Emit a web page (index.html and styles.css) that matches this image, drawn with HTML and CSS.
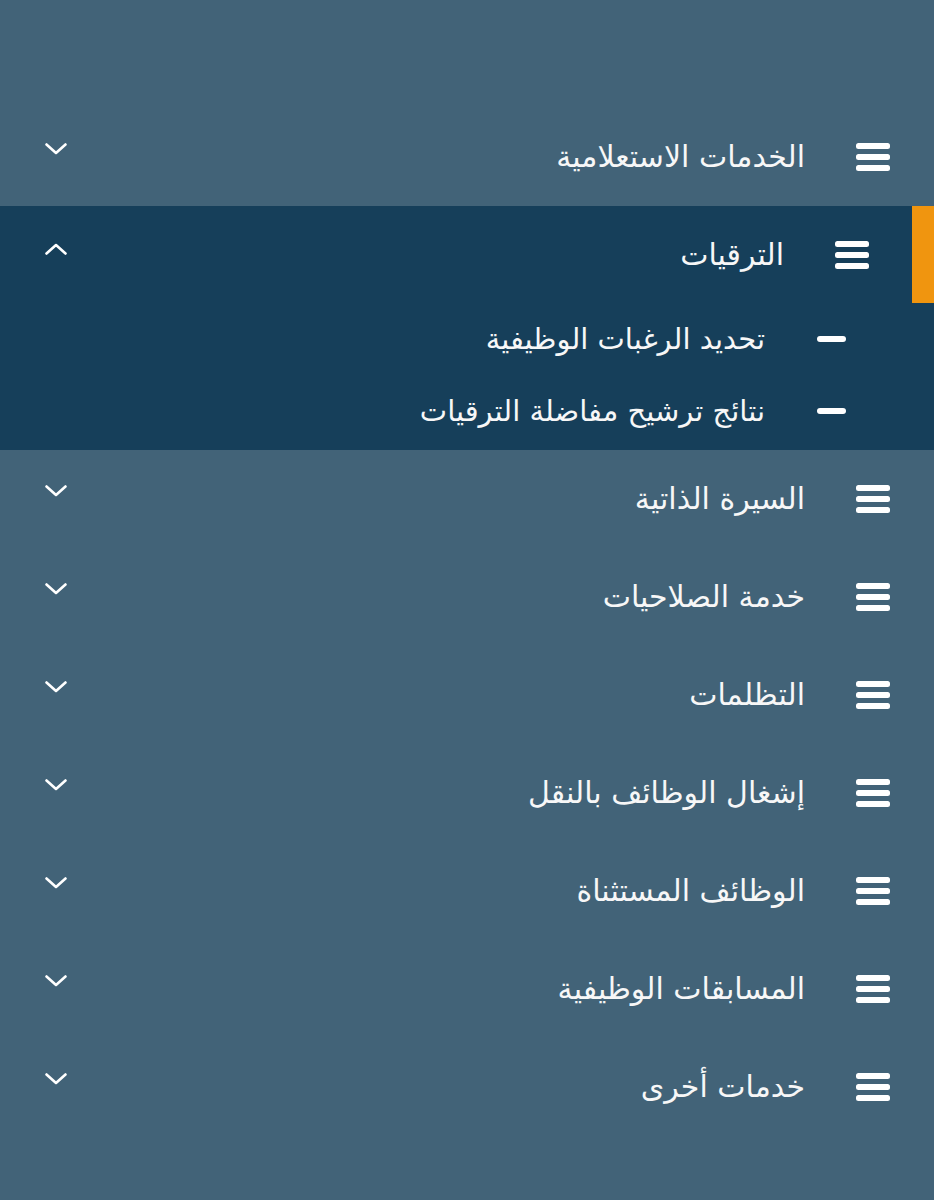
FILE: index.html
```html
<!DOCTYPE html>
<html lang="ar" dir="rtl">
<head>
<meta charset="utf-8">
<link rel="stylesheet" href="styles.css">
</head>
<body>
<nav class="menu">
  <div class="item">
    <div class="row">
      <svg class="burger" viewBox="0 0 34 28"><rect x="0" y="0" width="34" height="6" rx="2.5"/><rect x="0" y="11" width="34" height="6" rx="2.5"/><rect x="0" y="22" width="34" height="6" rx="2.5"/></svg>
      <span class="label">الخدمات الاستعلامية</span>
      <svg class="chev" viewBox="0 0 22 12"><path d="M1.5 1.5 L11 10 L20.5 1.5"/></svg>
    </div>
  </div>
  <div class="item open">
    <div class="row">
      <svg class="burger" viewBox="0 0 34 28"><rect x="0" y="0" width="34" height="6" rx="2.5"/><rect x="0" y="11" width="34" height="6" rx="2.5"/><rect x="0" y="22" width="34" height="6" rx="2.5"/></svg>
      <span class="label">الترقيات</span>
      <svg class="chev" viewBox="0 0 22 12"><path d="M1.5 10.5 L11 2 L20.5 10.5"/></svg>
    </div>
    <ul class="sub">
      <li><span class="dash"></span><span class="sublabel">تحديد الرغبات الوظيفية</span></li>
      <li><span class="dash"></span><span class="sublabel">نتائج ترشيح مفاضلة الترقيات</span></li>
    </ul>
  </div>
  <div class="item">
    <div class="row">
      <svg class="burger" viewBox="0 0 34 28"><rect x="0" y="0" width="34" height="6" rx="2.5"/><rect x="0" y="11" width="34" height="6" rx="2.5"/><rect x="0" y="22" width="34" height="6" rx="2.5"/></svg>
      <span class="label">السيرة الذاتية</span>
      <svg class="chev" viewBox="0 0 22 12"><path d="M1.5 1.5 L11 10 L20.5 1.5"/></svg>
    </div>
  </div>
  <div class="item">
    <div class="row">
      <svg class="burger" viewBox="0 0 34 28"><rect x="0" y="0" width="34" height="6" rx="2.5"/><rect x="0" y="11" width="34" height="6" rx="2.5"/><rect x="0" y="22" width="34" height="6" rx="2.5"/></svg>
      <span class="label">خدمة الصلاحيات</span>
      <svg class="chev" viewBox="0 0 22 12"><path d="M1.5 1.5 L11 10 L20.5 1.5"/></svg>
    </div>
  </div>
  <div class="item">
    <div class="row">
      <svg class="burger" viewBox="0 0 34 28"><rect x="0" y="0" width="34" height="6" rx="2.5"/><rect x="0" y="11" width="34" height="6" rx="2.5"/><rect x="0" y="22" width="34" height="6" rx="2.5"/></svg>
      <span class="label">التظلمات</span>
      <svg class="chev" viewBox="0 0 22 12"><path d="M1.5 1.5 L11 10 L20.5 1.5"/></svg>
    </div>
  </div>
  <div class="item">
    <div class="row">
      <svg class="burger" viewBox="0 0 34 28"><rect x="0" y="0" width="34" height="6" rx="2.5"/><rect x="0" y="11" width="34" height="6" rx="2.5"/><rect x="0" y="22" width="34" height="6" rx="2.5"/></svg>
      <span class="label">إشغال الوظائف بالنقل</span>
      <svg class="chev" viewBox="0 0 22 12"><path d="M1.5 1.5 L11 10 L20.5 1.5"/></svg>
    </div>
  </div>
  <div class="item">
    <div class="row">
      <svg class="burger" viewBox="0 0 34 28"><rect x="0" y="0" width="34" height="6" rx="2.5"/><rect x="0" y="11" width="34" height="6" rx="2.5"/><rect x="0" y="22" width="34" height="6" rx="2.5"/></svg>
      <span class="label">الوظائف المستثناة</span>
      <svg class="chev" viewBox="0 0 22 12"><path d="M1.5 1.5 L11 10 L20.5 1.5"/></svg>
    </div>
  </div>
  <div class="item">
    <div class="row">
      <svg class="burger" viewBox="0 0 34 28"><rect x="0" y="0" width="34" height="6" rx="2.5"/><rect x="0" y="11" width="34" height="6" rx="2.5"/><rect x="0" y="22" width="34" height="6" rx="2.5"/></svg>
      <span class="label">المسابقات الوظيفية</span>
      <svg class="chev" viewBox="0 0 22 12"><path d="M1.5 1.5 L11 10 L20.5 1.5"/></svg>
    </div>
  </div>
  <div class="item">
    <div class="row">
      <svg class="burger" viewBox="0 0 34 28"><rect x="0" y="0" width="34" height="6" rx="2.5"/><rect x="0" y="11" width="34" height="6" rx="2.5"/><rect x="0" y="22" width="34" height="6" rx="2.5"/></svg>
      <span class="label">خدمات أخرى</span>
      <svg class="chev" viewBox="0 0 22 12"><path d="M1.5 1.5 L11 10 L20.5 1.5"/></svg>
    </div>
  </div>
</nav>
</body>
</html>
```

FILE: styles.css
```css
html, body {
  margin: 0;
  padding: 0;
  background: #426378;
}
body {
  font-family: "DejaVu Sans", "Noto Sans", sans-serif;
  color: #f7f7f7;
  width: 934px;
  min-height: 1200px;
}
.menu {
  padding-top: 108px;
  display: flex;
  flex-direction: column;
}
.row {
  display: flex;
  align-items: center;
  height: 98px;
  padding: 0 44px 0 45px;
  box-sizing: border-box;
}
.burger {
  width: 34px;
  height: 28px;
  fill: #ffffff;
  flex: none;
}
.label {
  margin-right: 51px;
  font-size: 30px;
  line-height: 1;
  flex: 1;
  white-space: nowrap;
}
.chev {
  width: 22px;
  height: 12px;
  fill: none;
  stroke: #ffffff;
  stroke-width: 2.6;
  stroke-linecap: round;
  stroke-linejoin: round;
  flex: none;
  margin-bottom: 16px;
}
.open {
  background: #163f5a;
}
.open .row {
  height: 97px;
  border-right: 22px solid #f0950f;
  padding-right: 43px;
}
.open .chev {
  margin-bottom: 12px;
}
.sub {
  list-style: none;
  margin: 0;
  padding: 0 88px 3px 0;
}
.sub li {
  display: flex;
  align-items: center;
  height: 72px;
}
.dash {
  width: 29px;
  height: 6px;
  border-radius: 3px;
  background: #ffffff;
  flex: none;
}
.sublabel {
  margin-right: 52px;
  font-size: 29px;
  line-height: 1;
  white-space: nowrap;
}
```
